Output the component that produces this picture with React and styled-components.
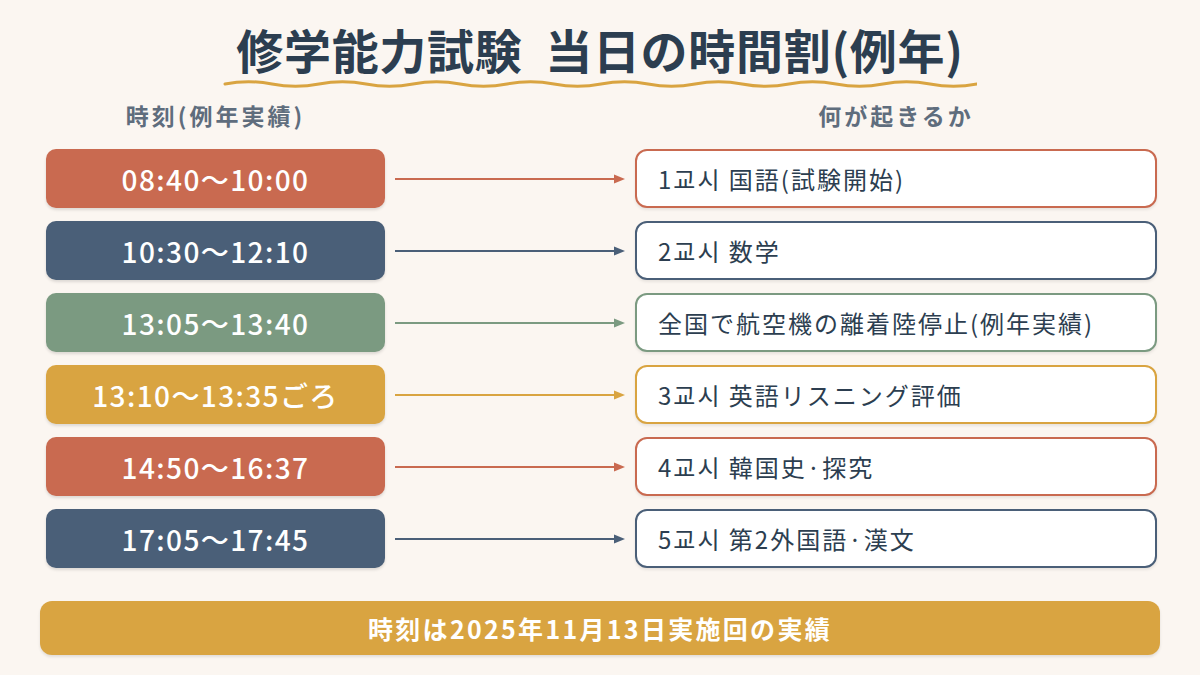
import React from "react";
import styled, { createGlobalStyle } from "styled-components";

const Global = createGlobalStyle`
  html, body { margin: 0; padding: 0; }
  body {
    background: #fbf6f1;
    font-family: "Noto Sans CJK JP", "Noto Sans", sans-serif;
    color: #2c3e50;
  }
`;

const Page = styled.div`
  width: 1200px;
  height: 675px;
  box-sizing: border-box;
  padding: 18px 43px 0 46px;
  display: flex;
  flex-direction: column;
  background: #fbf6f1;
`;

const TitleBlock = styled.header`
  display: flex;
  flex-direction: column;
  align-items: center;
  margin-left: -3px;
`;

const Title = styled.h1`
  margin: 0;
  font-size: 47px;
  font-weight: 700;
  line-height: 62px;
  color: #2c3e50;
  letter-spacing: 0.7px;
  white-space: pre;
`;

const Wave = styled.svg`
  display: block;
  width: 754px;
  height: 12px;
  margin-top: -2px;
`;

const Grid = styled.div`
  display: grid;
  grid-template-columns: 339px 1fr 522px;
  column-gap: 10px;
  row-gap: 13px;
  margin-top: 9px;
`;

const ColHead = styled.div`
  font-size: 23px;
  font-weight: 700;
  color: #5f6d7d;
  text-align: center;
  line-height: 32px;
  letter-spacing: 3px;
  grid-column: ${(p) => p.$col};
  margin-bottom: 5px;
`;

const TimePill = styled.div`
  height: 59px;
  border-radius: 10px;
  background: ${(p) => p.$color};
  color: #fff;
  display: flex;
  align-items: center;
  justify-content: center;
  font-size: 28px;
  font-weight: 500;
  letter-spacing: 1.4px;
  box-shadow: 0 2px 3px rgba(0, 0, 0, 0.12);
`;

const ArrowCell = styled.div`
  display: flex;
  align-items: center;
`;

const Event = styled.div`
  height: 59px;
  box-sizing: border-box;
  border: 2.5px solid ${(p) => p.$color};
  border-radius: 12px;
  background: #fff;
  display: flex;
  align-items: center;
  padding-left: 21px;
  font-size: 24px;
  font-weight: 400;
  letter-spacing: 2px;
  color: #2c3e50;
  box-shadow: 0 2px 3px rgba(0, 0, 0, 0.08);
`;

const Footer = styled.div`
  margin: 33px -3px 0 -6px;
  height: 54px;
  border-radius: 12px;
  background: #d9a441;
  color: #fff;
  display: flex;
  align-items: center;
  justify-content: center;
  font-size: 25px;
  font-weight: 700;
  letter-spacing: 2.3px;
  box-shadow: 0 2px 3px rgba(0, 0, 0, 0.1);
`;

const C = {
  red: "#c96a50",
  navy: "#4a5f78",
  sage: "#7b9a81",
  gold: "#d9a441",
};

const rows = [
  { time: "08:40〜10:00", event: "1교시 国語(試験開始)", color: C.red },
  { time: "10:30〜12:10", event: "2교시 数学", color: C.navy },
  { time: "13:05〜13:40", event: "全国で航空機の離着陸停止(例年実績)", color: C.sage },
  { time: "13:10〜13:35ごろ", event: "3교시 英語リスニング評価", color: C.gold },
  { time: "14:50〜16:37", event: "4교시 韓国史·探究", color: C.red },
  { time: "17:05〜17:45", event: "5교시 第2外国語·漢文", color: C.navy },
];

function Arrow({ color }) {
  return (
    <svg width="230" height="12" viewBox="0 0 230 12">
      <line x1="0" y1="6" x2="220" y2="6" stroke={color} strokeWidth="2" />
      <polygon points="219,1.5 230,6 219,10.5" fill={color} />
    </svg>
  );
}

function wavePath() {
  let d = "M2 6";
  const period = 94;
  const w = 750;
  for (let x = 2; x < w; x += period / 2) {
    const up = Math.round((x - 2) / (period / 2)) % 2 === 0;
    d += ` Q ${x + period / 4} ${up ? 1.5 : 10.5} ${x + period / 2} 6`;
  }
  return d;
}

export default function App() {
  return (
    <>
      <Global />
      <Page>
        <TitleBlock>
          <Title>{"修学能力試験  当日の時間割(例年)"}</Title>
          <Wave viewBox="0 0 754 12">
            <path d={wavePath()} fill="none" stroke="#d9a441" strokeWidth="3" strokeLinecap="round" />
          </Wave>
        </TitleBlock>
        <Grid>
          <ColHead $col="1">時刻(例年実績)</ColHead>
          <ColHead $col="3">何が起きるか</ColHead>
          {rows.map((r, i) => (
            <React.Fragment key={i}>
              <TimePill $color={r.color}>{r.time}</TimePill>
              <ArrowCell>
                <Arrow color={r.color} />
              </ArrowCell>
              <Event $color={r.color}>{r.event}</Event>
            </React.Fragment>
          ))}
        </Grid>
        <Footer>時刻は2025年11月13日実施回の実績</Footer>
      </Page>
    </>
  );
}
